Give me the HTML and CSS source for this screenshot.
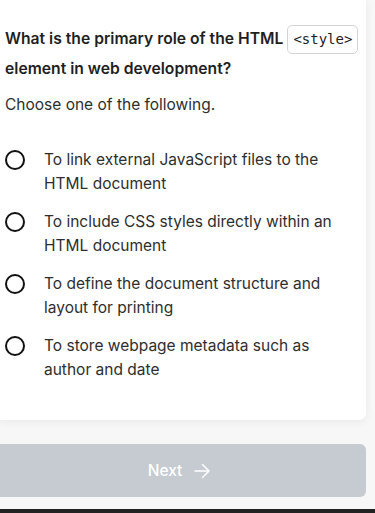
FILE: index.html
```html
<!DOCTYPE html>
<html>
<head>
<meta charset="utf-8">
<link rel="stylesheet" href="styles.css">
</head>
<body>
<div class="page">
  <div class="card">
    <h1 class="title">What is the primary role of the HTML <code class="code">&lt;style&gt;</code> element in web development?</h1>
    <p class="hint">Choose one of the following.</p>
    <ul class="options">
      <li class="option"><span class="radio"></span><span class="label">To link external JavaScript files to the HTML document</span></li>
      <li class="option"><span class="radio"></span><span class="label">To include CSS styles directly within an HTML document</span></li>
      <li class="option"><span class="radio"></span><span class="label">To define the document structure and layout for printing</span></li>
      <li class="option"><span class="radio"></span><span class="label">To store webpage metadata such as author and date</span></li>
    </ul>
  </div>
  <button class="next">Next
    <svg class="arrow" width="16" height="16" viewBox="0 0 16 16" fill="none" stroke="currentColor" stroke-width="1.5" stroke-linecap="round" stroke-linejoin="round"><path d="M1 8h14M8.5 1.5L15 8l-6.5 6.5"/></svg>
  </button>
</div>
<div class="bottombar"></div>
</body>
</html>
```
FILE: styles.css
```css
* { box-sizing: border-box; }
html, body { margin: 0; padding: 0; }
body {
  background: #f7f7f7;
  font-family: Inter, "Noto Sans", sans-serif;
  width: 375px;
  height: 513px;
  overflow: hidden;
  display: flex;
  flex-direction: column;
}
.page {
  width: 366px;
  display: flex;
  flex-direction: column;
  gap: 24px;
}
.card {
  background: #fff;
  border-radius: 0 0 7px 0;
  box-shadow: 0 2px 8px rgba(0,0,0,0.06);
  padding: 24px 2px 38px 5px;
}
.title {
  margin: 0;
  font-size: 15.7px;
  font-weight: 600;
  line-height: 29px;
  color: #1f1f1f;
}
.code {
  font-family: "DejaVu Sans Mono", monospace;
  font-weight: 400;
  font-size: 14px;
  color: #222;
  border: 1px solid #d4d4d4;
  border-radius: 5px;
  padding: 5px 5px 6px;
}
.hint {
  margin: 10px 0 0;
  font-size: 15.5px;
  line-height: 24px;
  color: #2e2e2e;
}
.options {
  list-style: none;
  margin: 31px 0 0;
  padding: 0 26px 0 0;
  display: flex;
  flex-direction: column;
  gap: 14px;
}
.option {
  display: flex;
  align-items: flex-start;
  gap: 19px;
}
.radio {
  flex: none;
  width: 20px;
  height: 20px;
  margin-top: 2px;
  border: 2px solid #111;
  border-radius: 50%;
}
.label {
  font-size: 15.5px;
  line-height: 24px;
  color: #2e2e2e;
}
.next {
  height: 53px;
  border: 0;
  border-radius: 0 6px 6px 0;
  background: #c5cbd1;
  color: #fff;
  font-family: Inter, "Noto Sans", sans-serif;
  font-size: 15.5px;
  font-weight: 500;
  display: flex;
  align-items: center;
  justify-content: center;
  gap: 12px;
  padding: 0 8px 0 0;
}
.arrow { display: block; }
.bottombar {
  margin-top: 12px;
  height: 10px;
  background: #222;
}
```
